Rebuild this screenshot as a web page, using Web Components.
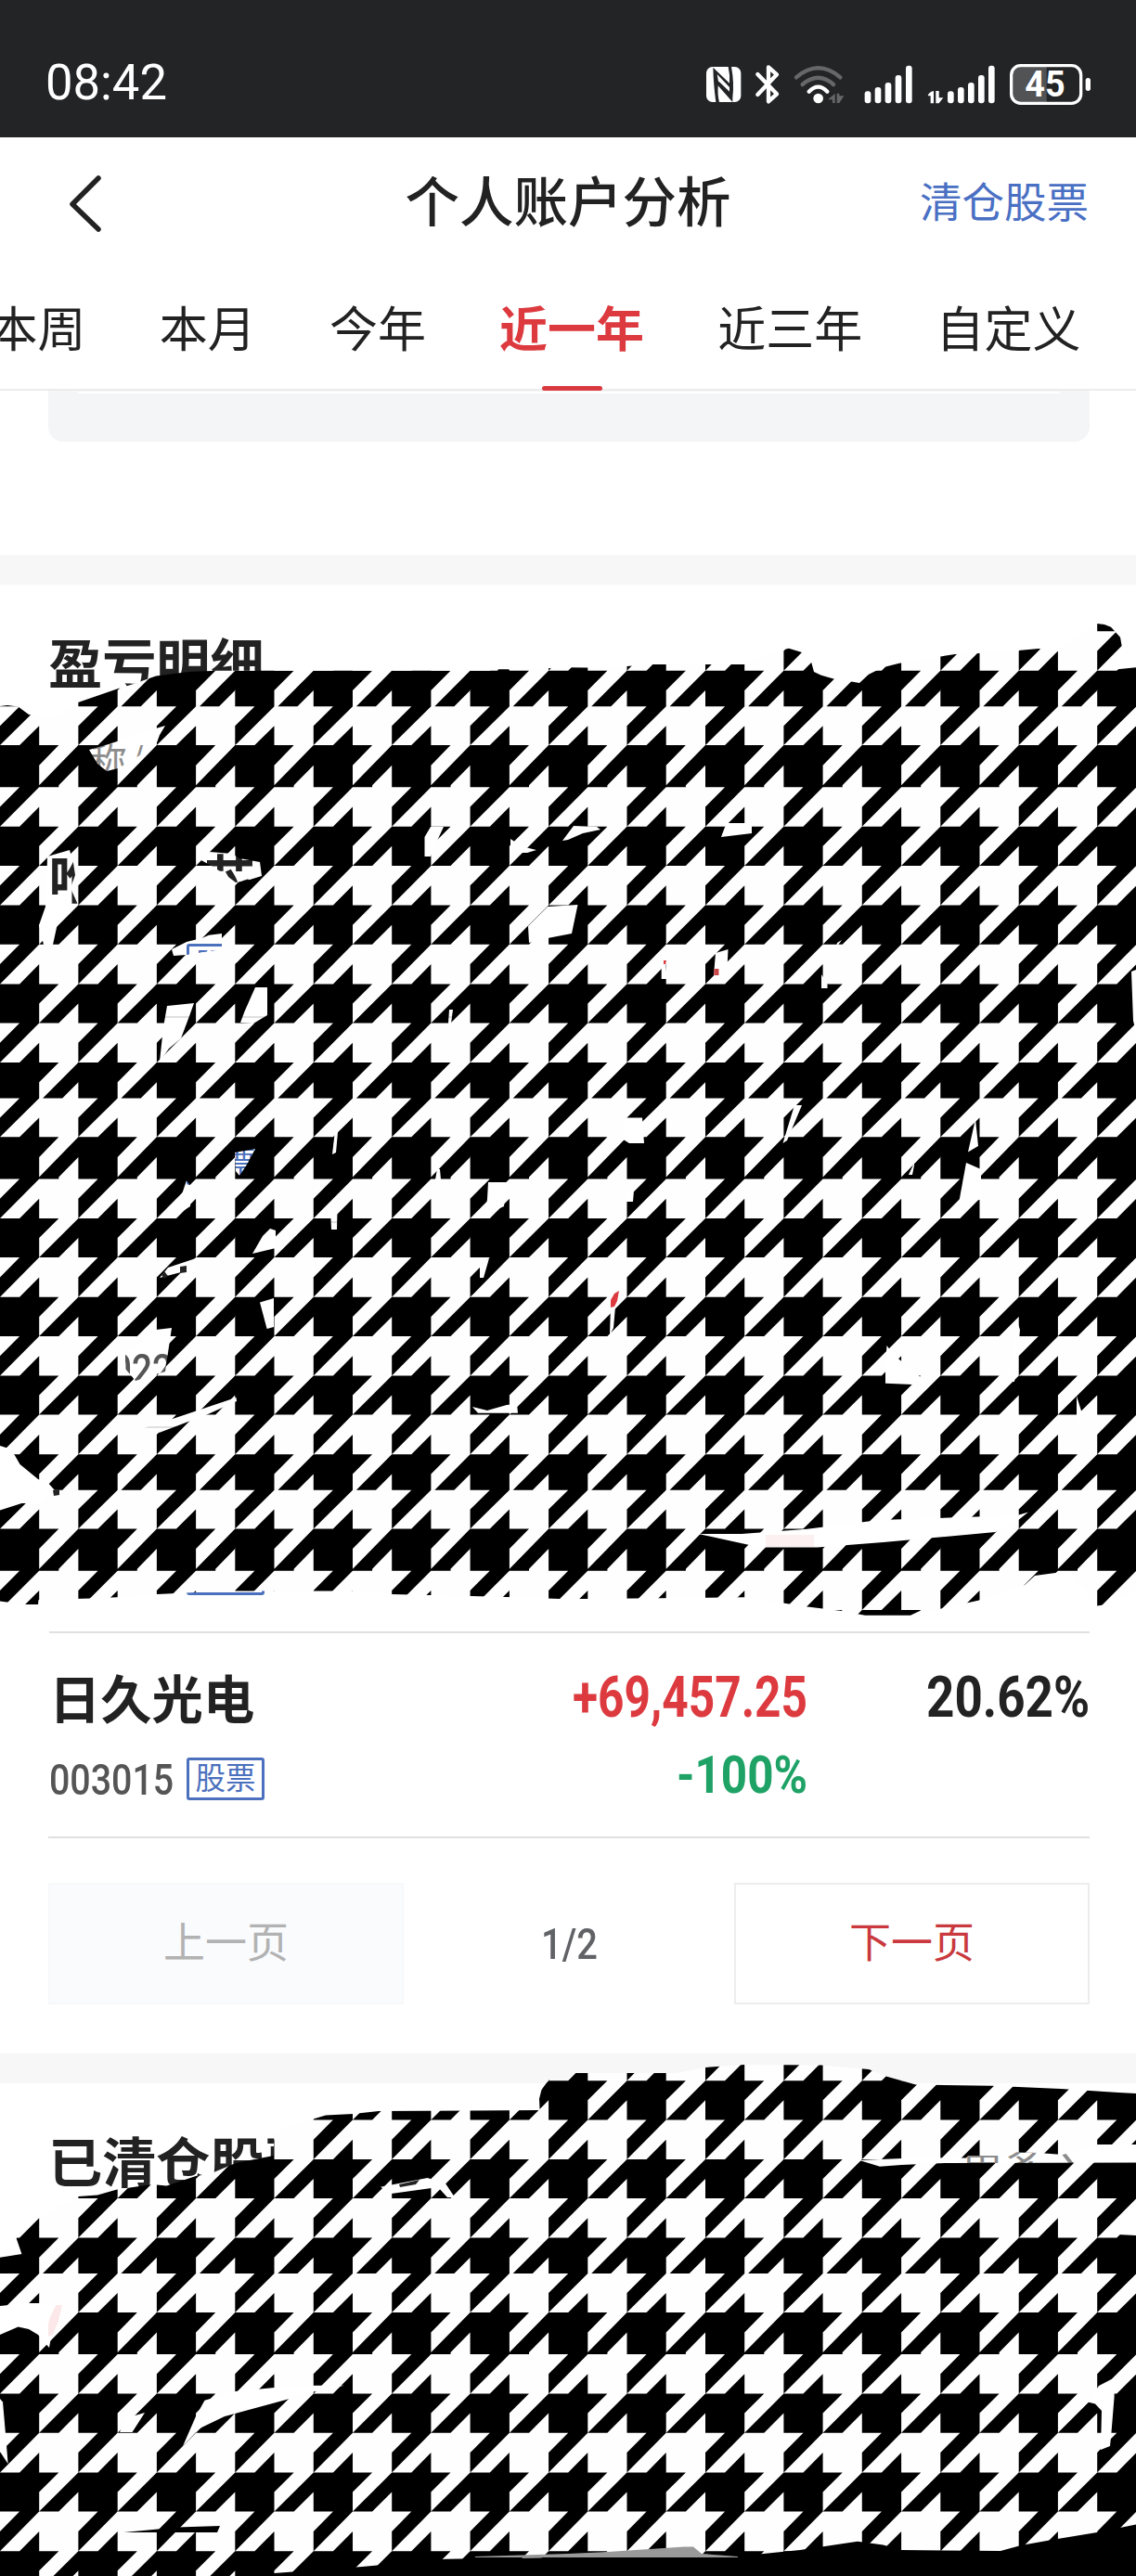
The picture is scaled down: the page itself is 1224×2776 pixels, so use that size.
<!DOCTYPE html>
<html lang="zh-CN">
<head>
<meta charset="utf-8">
<title>个人账户分析</title>
<style>
html,body{margin:0;padding:0;background:#fff}
body{width:1224px;height:2776px;overflow:hidden;font-family:"Noto Sans CJK SC",sans-serif;color:#222}
</style>
</head>
<body>
<account-page></account-page>
<script>
function define(name, html, setup) {
  const t = document.createElement('template');
  t.innerHTML = html;
  customElements.define(name, class extends HTMLElement {
    connectedCallback() {
      if (this.shadowRoot) return;
      this.attachShadow({mode: 'open'}).appendChild(t.content.cloneNode(true));
      if (setup) setup(this, this.shadowRoot);
    }
  });
}

/* Condensed numerals: squeezes its text to the width given in "w". */
define('num-text', `<style>
:host{display:block;font-family:Roboto,sans-serif;line-height:1;white-space:nowrap}
span{display:inline-block;transform-origin:0 50%}
</style><span><slot></slot></span>`, (el, r) => {
  const s = r.querySelector('span'), w = +el.getAttribute('w');
  el.style.width = w + 'px';
  s.style.transform = 'scaleX(' + w / s.offsetWidth + ')';
});

define('status-bar', `<style>
:host{display:flex;box-sizing:border-box;height:148px;background:#232426;color:#fff;justify-content:space-between;padding:0 0 0 49px}
num-text{font-size:53px;margin-top:63px}
svg{display:block;margin-top:50px;width:494px;height:80px}
</style>
<num-text w="131">08:42</num-text>
<svg viewBox="0 0 1482 240" fill="#fff">
<rect x="93" y="66" width="112" height="114" rx="20"/>
<path d="M115 68L168 119Q170 92 164 66L174 66Q184 120 178 166L178 180L131 127Q129 158 135 180L124 180Q116 120 115 68Z" fill="#232426"/>
<path d="M128 90L168 132V146L132 112Z" fill="#fff"/>
<path d="M259 90L321 154L294 178V67L321 91L259 156" fill="none" stroke="#fff" stroke-width="13" stroke-linecap="round" stroke-linejoin="round"/>
<path d="M384 100Q455 40 526 100" fill="none" stroke="#666769" stroke-width="13" stroke-linecap="round"/>
<path d="M404 123Q455 80 504 123" fill="none" stroke="#666769" stroke-width="13" stroke-linecap="round"/>
<path d="M425 146Q455 116 484 146" fill="none" stroke="#fff" stroke-width="13" stroke-linecap="round"/>
<circle cx="455" cy="168" r="16"/>
<path d="M509 152V183H501V172H487ZM515 152H523V160H538L523 183H515Z" fill="#666769"/>
<rect x="605" y="145" width="20" height="39" rx="9"/><rect x="638" y="132" width="20" height="52" rx="9"/><rect x="671" y="117" width="20" height="67" rx="9"/><rect x="704" y="93" width="20" height="91" rx="9"/><rect x="738" y="62" width="20" height="122" rx="9"/>
<path d="M828 144V184H818V160H809Q812 148 828 144ZM835 144H845V166H859L845 184H835Z"/>
<rect x="873" y="145" width="20" height="39" rx="9"/><rect x="906" y="132" width="20" height="52" rx="9"/><rect x="939" y="117" width="20" height="67" rx="9"/><rect x="972" y="93" width="20" height="91" rx="9"/><rect x="1005" y="62" width="20" height="122" rx="9"/>
<path d="M1105 66H1193V180H1105Q1084 180 1084 158V88Q1084 66 1105 66Z" fill="#525355"/>
<rect x="1079" y="62" width="225" height="122" rx="30" fill="none" stroke="#fff" stroke-width="10"/>
<rect x="1319" y="102" width="16" height="42" rx="8"/>
<text x="1123" y="162" font-family="Roboto" font-weight="700" font-size="114" textLength="130" lengthAdjust="spacingAndGlyphs">45</text>
</svg>`);

define('nav-header', `<style>
:host{display:grid;grid-template-columns:1fr auto 1fr;align-items:center;box-sizing:border-box;height:138px;padding:0 51px 0 51px}
svg{display:block;width:40px;height:64px;margin:4px 0 0 21px}
h1{margin:0;font-size:58.5px;font-weight:500;line-height:80px;padding-bottom:6px}
a{justify-self:end;font-size:45.5px;color:#4a70c4;line-height:60px;padding-bottom:4px}
</style>
<svg viewBox="0 0 40 64" fill="none" stroke="#222" stroke-width="5.5" stroke-linecap="round" stroke-linejoin="round"><path d="M34 5L6 33L34 60"/></svg>
<h1><slot></slot></h1><a><slot name="action"></slot></a>`);

define('range-tab', `<style>
:host{display:flex;flex-direction:column;align-items:center;font-size:52px;line-height:76px;white-space:nowrap;padding-top:28px;height:107px}
:host([active]){color:#dc3a3f;font-weight:700}
i{display:none;width:65px;height:6.5px;border-radius:3px;background:#d93a3f;margin-top:25.5px}
:host([active]) i{display:block}
</style><slot></slot><i></i>`);

define('range-tabs', `<style>
:host{display:flex;position:relative;z-index:1;box-sizing:border-box;height:135px;gap:79.2px;margin-left:-11.5px;border-bottom:2px solid #ececec}
</style><slot></slot>`);

define('stock-tag', `<style>
:host{display:flex;align-items:center;justify-content:center;box-sizing:border-box;width:84px;height:46px;border:3px solid #4b70bd;border-radius:3px;color:#4b70bd;font-size:32.5px;line-height:38px;padding-bottom:6px;white-space:nowrap}
</style><slot>股票</slot>`);

define('stock-row', `<style>
:host{display:grid;grid-template-columns:566px 251px 304px;grid-template-rows:94px 79px;box-sizing:border-box;height:221px;padding-top:28px;border-top:2px solid #e0e0e0}
.name{display:flex;justify-content:space-between;width:222px;font-size:55.3px;font-weight:700;line-height:80px;height:88px;white-space:nowrap}
.code{display:flex;align-items:center;justify-content:space-between;width:232px;height:68px;margin-top:1px;color:#555}
.r{display:flex;justify-content:flex-end;align-items:center;height:82px}
.p{height:63px}
</style>
<div class="name"><slot name="name"></slot></div>
<div class="r"><slot name="amount"></slot></div>
<div class="r"><slot name="ratio"></slot></div>
<div class="code"><slot name="code"><span></span></slot><slot name="tag"></slot></div>
<div class="r p"><slot name="pct"></slot></div>`);

define('page-button', `<style>
:host{display:flex;box-sizing:border-box;width:383px;height:131px;align-items:center;justify-content:center;border:2px solid #ededed;color:#c9393e;font-size:45px;line-height:60px;padding-bottom:7px}
:host([disabled]){background:#fafbfd;border-color:#f7f8fa;color:#b2b2b2}
</style><slot></slot>`);

define('section-title', `<style>
:host{display:flex;justify-content:space-between;align-items:center;box-sizing:border-box;height:172px;padding:0 51px 0 52px}
h2{margin:0;font-size:58.2px;line-height:80px;font-weight:700;padding-bottom:8px}
</style><h2><slot></slot></h2><slot name="more"></slot>`);

/* Houndstooth scribble laid over parts of the lists. */
define('scribble-mask', `<style>
:host{position:absolute;left:0;top:0;width:1224px;height:2776px;pointer-events:none}
svg{display:block}
</style><svg width="1224" height="2776" viewBox="0 0 1224 2776">
<defs><mask id="m" maskUnits="userSpaceOnUse" x="0" y="0" width="1224" height="2776"><g id="area" fill="#fff"></g><g id="holes" fill="#000"></g></mask></defs>
<g mask="url(#m)"><rect width="1224" height="2776" fill="#fefefe"/><path id="p" fill="#000"/></g>
<g id="extra"></g></svg>`, (el, r) => {
  const bounds = [0, 41.8, 87, 129.4, 171.6, 214.3, 256.5, 299.1, 341.1, 383.7, 422.2];
  const w = 42.22, n = x => x.toFixed(1);
  let d = '';
  const poly = pts => { d += 'M' + pts.map(q => n(q[0]) + ' ' + n(q[1])).join('L') + 'Z'; };
  for (let t = 0; t < 6; t++) {
    const base = 339.1 + t * 422.2;
    for (let k = 0; k < 10; k++) {
      const y = base + bounds[k], b = base + bounds[k + 1];
      if (b < 660) continue;
      const H = k === 9 ? 42.4 : k === 1 ? 43.2 : b - y, m = y + H / 2;
      for (let i = -1; i < 15; i++) {
        const x = i * 2 * w;
        if (k % 2) {
          poly([[x, y], [x + 1.5 * w, y], [x + w, m], [x + w, b], [x, b]]);
          if (k === 9) {
            const s = (y + H - b) / H * w;
            poly([[x + 2 * w, y], [x + 2 * w, m], [x + 1.5 * w + s, b], [x + w + s, b]]);
          } else poly([[x + 2 * w, y], [x + 2 * w, m], [x + 1.5 * w, y + H], [x + 1.5 * w, b], [x + w, b], [x + w, y + H]]);
        } else {
          poly([[x + .5 * w, y], [x + w, y], [x, b], [x, m]]);
          poly([[x + .5 * w, b], [x + w, m], [x + w, b]]);
        }
      }
    }
  }
  r.getElementById('p').setAttribute('d', d);
  const NS = 'http://www.w3.org/2000/svg';
  const add = (id, points, fill) => {
    const p = document.createElementNS(NS, 'polygon');
    p.setAttribute('points', points);
    if (fill) p.setAttribute('fill', fill);
    r.getElementById(id).appendChild(p);
  };
  add('area', '0,761 8,760 19.5,761.5 31,770 60,775 84,757 126,742.5 144,737 168,728.5 203,724 234,722.7 536,722.7 537,721.3 548,721.3 549,722 612,719.3 632,719.5 675,718 702,716 802,716 844,700 850,698.7 864,703 874,713 877,724 885,727.7 899,731.7 916,734.3 926,736 936,726.7 951,719.3 969,714.7 1012,707.7 1029,705 1054,704 1097,701 1119,699 1139,701.7 1182,672 1190,673 1197,675.7 1207,686.7 1208.8,696.7 1199,721.7 1224,719.3 1224,1045 1219,1047 1221,1100 1224,1112 1224,1713 1193,1729 1182,1730.6 1152,1693 1115,1698 1104,1708 1054,1724.7 1012,1734 990,1736.5 981,1740.7 932,1740.7 907,1736 866,1731 844,1727.6 802,1721.3 632,1723 603,1723 546,1721 506,1720 422,1718 380,1714.6 253,1714.6 211,1716 169,1718 126,1721.3 98,1722.6 41.5,1724 41,1729 25,1729 0,1725.5');
  add('area', '0,2432.8 23.4,2429 17.6,2412 41,2390 84,2367 105,2365.5 126,2359.4 164,2354 179.5,2355.6 211,2345 226,2342.7 254,2331 294.7,2323 295.5,2298 337.6,2283.4 351,2279.6 380.6,2278 408,2275 581.6,2274 581,2261.7 583.5,2252 591,2241.6 612,2241 618,2234 729,2234 760,2228 802,2225 885,2225.6 936,2230 955.5,2237.8 986.7,2246.5 1068.7,2247.7 1143,2251 1205,2255 1224,2256 1224,2776 0,2776');
  `0,1558 8,1560.5 15.6,1567.7 21.5,1578 41,1594 52.7,1599 58.5,1605.5 43,1620 23.4,1620 0,1627.5
96,808 117,802 168,785 178,782 172,792 168,803 141,820 127,828 115,831 105,823
51,923 75,916 79,930 81,943 76,957 84,975 62,995 57,1018 47,1018 42,997 49,977 50,960
213,925 226,918 250,920 258,925 280,929 282,944 269,948 254,951 242,942 226,932
457.5,902 464,891 478,891 471.5,905 464,923 457.5,923
550,904 562,912 578,916 568,919 550,919
569,998 590,977 622.5,975 616,1006 590,1011 570,1016
606,906 618,890 643,891 647,894 628,898 612,905
777,902 782.6,887 810,887 810,898
712.7,1037 717,1034 718.5,1055 712.7,1055
771,1027 784.5,1023 783.7,1040 774,1051.7 769,1051
885,1050 891.5,1061 891.5,1065 885,1065
902,1016 907,1013 901,1021
185,1023 201,1015 218,1010.7 225,1007.7 239,1006 239,1023 201,1029 187,1030
180,1084 209,1081 204,1095 195,1119 182,1130 172,1144 176,1107
263.5,1090 275,1064 288,1064 288,1094 273,1103 259,1102
484,1088 488,1088 486,1103 483,1103
253,1242 275,1238 266,1255 258,1267 254,1262
201,1272 206,1279 205,1300 191,1309 195,1290
361,1218 364,1220 362,1242 358,1244
356,1302 363.5,1302 363,1325 357,1325
471,1260 474,1260 475,1271 469,1271
526,1274 546,1274 543,1300 523,1309 525,1292
272,1351 283,1332 291,1324 297,1326 297,1345
172,1377 181,1366 211,1356 211,1366 195,1371
517,1364 527,1356 521,1377 517,1377
280,1403.5 295,1399 295,1430 287.6,1432
168,1433 185,1431 180,1464.6 178,1478 146,1488 135,1475 135,1460
189,1528 254.5,1506 255,1510 224,1524 172,1543.7 156,1538.6
509,1516 525,1520 546,1514 557,1513 558,1522.7 515,1522.7
674.5,1204.5 692,1204.5 694,1232 678,1232 670,1227
674,1283 683,1283 682,1295 674,1295
856,1191 864,1191 848,1229 843.5,1232
985,1253 985,1256 983,1266 979,1266
1051,1206 1054,1235 1043,1241.5
1041,1253 1057,1260 1057,1293 1033.5,1294
658,1405 663,1408 661,1431 657,1439
955.5,1450 963,1460 996.5,1488 983,1492 954,1490.7 954,1471
1097,1427 1099,1433 1096,1469 1093,1489 1084,1489
1160,1504.6 1166,1523.5 1160,1536
752.5,1653 799,1653 869.6,1647.7 947.7,1638 1096,1633 1108,1629.6 1096,1639 1072.6,1651 951.6,1662 881,1667.4 819,1667.4 803,1664
0,2485 29,2482 53,2482 60,2490 53,2530 41,2516 31,2510 19.5,2507.6 0,2516
0,2585 3,2588.6 6,2623 8.6,2655 0,2642
129,2621 135,2606 156,2600 142.5,2621
220.5,2586.7 254,2577 295.5,2573 339.6,2570.7 371,2570.7 339.6,2577 312,2585 242,2604 215,2617 197,2636 211,2604
410,2356.7 460.6,2347 480,2353 490,2368 482,2368 472,2357 421.5,2364
926,2328 983,2325.6 1041,2325.6 1043,2323 1084,2323 1088,2319 1119,2320 1145,2322 1182,2311 1224,2311 1224,2330.5 1018,2331 971,2333 948,2334.7
1186,2410 1205,2389 1224,2378 1224,2409 1205,2408
1172,2588.6 1184,2571 1197.5,2564 1200.6,2564 1200.6,2583 1197.5,2621 1196,2636 1186,2640 1187,2598 1180,2590.5`.split('\n').forEach(s => add('holes', s));
  add('extra', '295,2776 295,2773 390,2766 480,2757.7 612,2756 795.5,2754.7 862,2748 924,2738.7 951.6,2742.5 971,2748 1078,2749 1100,2743 1135,2736.8 1182,2729 1224,2720.5 1224,2776', '#000');
  add('extra', '512,2755 612,2752 655,2750 737,2744.4 747,2744.4 756,2752 795,2755 795,2756 512,2756', '#999');
  add('extra', '133.5,2729 191,2723.5 237,2722 234,2729', '#000');
  add('extra', '67,2484 60.5,2484 54,2497 52,2505 52,2518 56.6,2516 62.5,2503', '#fce8e8');
  add('extra', '825,1654 877,1654 877,1667 825,1667', '#fdf0f0');
  add('extra', '667,1391 662,1394 658,1401 658,1409 662,1408 665,1402', '#dc3a3f');
  add('extra', '769.3,1044 774.5,1044 774.5,1051 769.3,1051', '#c9464b');
  add('extra', '715,1035 718,1035 717,1039 715,1039', '#dc3a3f');
  add('extra', '194,1365 201,1364 201,1371 194,1372', '#222');
  add('extra', '174,1374 177,1370 181,1375 177,1378', '#222');
  add('extra', '57,1606 64,1605 64,1611 58,1612', '#222');
  add('extra', '430,2354 452,2349 448,2354 431,2357', '#222');
});

define('account-page', `<style>
:host{display:block;position:relative;width:1224px;height:2776px;overflow:hidden;background:#fff}
.card{box-sizing:border-box;height:55px;margin:0 50px 0 52px;padding:1px 32px;background:#f4f5f7;border-radius:0 0 16px 16px}
.card i{display:block;height:2px;background:#fff}
.band{height:32px;background:#f7f7f7}
.gap{height:122px}
.head{display:flex;box-sizing:border-box;height:72px;padding:0 0 0 97px;font-size:40px;line-height:33px;color:#8c8c8c;letter-spacing:2px}
.list{padding:0 50px 0 53px}
.pager{display:flex;justify-content:space-between;align-items:center;border-top:2px solid #e0e0e0;margin:0 50px 0 52px;padding:48px 0 53px}
.big{font-size:62px;font-weight:700}
.low{margin-top:13px}
.more{display:flex;align-items:center;gap:15px;font-size:46px;line-height:60px;color:#8c8c8c;padding:0 17px 0 0;margin-top:0}
.more svg{display:block;width:14px;height:30px}
</style>
<status-bar></status-bar>
<nav-header>个人账户分析<span slot="action">清仓股票</span></nav-header>
<range-tabs><range-tab>本周</range-tab><range-tab>本月</range-tab><range-tab>今年</range-tab><range-tab active>近一年</range-tab><range-tab>近三年</range-tab><range-tab>自定义</range-tab></range-tabs>
<div class="card"><i></i></div>
<div class="gap"></div>
<div class="band"></div>
<section-title>盈亏明细</section-title>
<div class="head">称/</div>
<div class="list">
<stock-row><span slot="name">唯</span><span slot="name">芯</span><span slot="code"></span><stock-tag slot="tag" class="low"></stock-tag></stock-row>
<stock-row><span slot="code"></span><stock-tag slot="tag"></stock-tag></stock-row>
<stock-row><num-text slot="code" w="66" style="font-size:47px;font-weight:500;margin-left:67px">022</num-text></stock-row>
<stock-row><span slot="code"></span><stock-tag slot="tag"></stock-tag></stock-row>
<stock-row><span slot="name">日久光电</span>
<num-text slot="amount" w="253" class="big" style="color:#dc3a3f">+69,457.25</num-text>
<num-text slot="ratio" w="176" class="big">20.62%</num-text>
<num-text slot="code" w="134" style="font-size:47px;font-weight:500">003015</num-text><stock-tag slot="tag"></stock-tag>
<num-text slot="pct" w="141" style="font-size:55px;font-weight:700;color:#1fa266">-100%</num-text></stock-row>
</div>
<div class="pager"><page-button disabled>上一页</page-button><num-text w="61" style="font-size:47px;font-weight:500;color:#606266">1/2</num-text><page-button>下一页</page-button></div>
<div class="band"></div>
<section-title>已清仓股票<span slot="more" class="more">更多<svg viewBox="0 0 14 30" fill="none" stroke="#8c8c8c" stroke-width="4"><path d="M1 1L12 15L1 29"/></svg></span></section-title>
<scribble-mask></scribble-mask>`);
</script>
</body>
</html>
